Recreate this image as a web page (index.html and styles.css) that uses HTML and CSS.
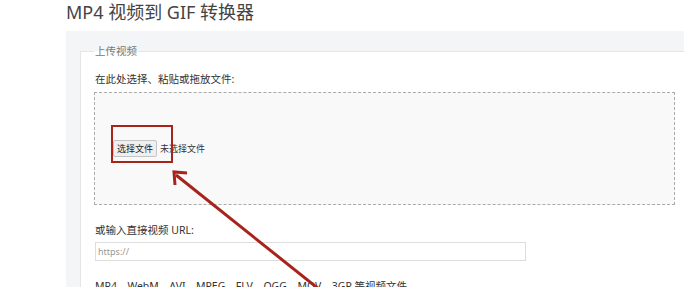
FILE: index.html
```html
<!DOCTYPE html>
<html>
<head>
  <title>MP4 视频到 GIF 转换器</title>
  <link rel="stylesheet" href="styles.css">
</head>
<body>
  <div class="page">
    <h1>MP4 视频到 GIF 转换器</h1>

    <div class="panel">
      <fieldset class="upload">
        <legend>上传视频</legend>

        <label class="field-label">在此处选择、粘贴或拖放文件:</label>
        <div class="dropzone">
          <button type="button" class="file-btn">选择文件</button>
          <span class="file-name">未选择文件</span>
        </div>

        <label class="field-label url-label" for="url">或输入直接视频 URL:</label>
        <input type="text" id="url" class="url-input" placeholder="https://">

        <p class="formats">MP4、WebM、AVI、MPEG、FLV、OGG、MOV、3GP 等视频文件</p>
      </fieldset>
    </div>

    <!-- annotation drawn over the form -->
    <svg class="markup" width="684" height="287" viewBox="0 0 684 287">
      <rect x="112" y="126" width="60" height="36" fill="none" stroke="#a8231b" stroke-width="2"/>
      <line x1="176" y1="175" x2="330" y2="298" stroke="#a8231b" stroke-width="3"/>
      <polyline points="187,173 174,172 175,185" fill="none" stroke="#a8231b" stroke-width="3" stroke-linejoin="miter"/>
    </svg>
  </div>
</body>
</html>
```

FILE: styles.css
```css
body {
  margin: 0;
  padding: 0;
  background-color: #ffffff;
  font-family: "Noto Sans", "Noto Sans CJK SC", sans-serif;
  color: #333333;
  overflow: hidden;
}

.page {
  position: relative;
  padding-left: 66px;
  height: 287px;
  overflow: hidden;
}

h1 {
  margin: 0;
  font-size: 18px;
  font-weight: normal;
  line-height: 24px;
  color: #444444;
}

.panel {
  margin-top: 7px;
  width: 720px;
  background-color: #f4f5f6;
  padding: 12px 0 0 14px;
}

.upload {
  margin: 0;
  padding: 12px 14px 0 14px;
  border: 1px solid #e4e5e6;
  background-color: #ffffff;
}

.upload legend {
  padding: 0 1px;
  margin-left: -1px;
  font-size: 10.5px;
  line-height: 16px;
  color: #777777;
}

.field-label {
  display: block;
  font-size: 10.5px;
  line-height: 16px;
  color: #333333;
}

.dropzone {
  margin-top: 5px;
  margin-left: -1px;
  width: 561px;
  height: 111px;
  border: 1px dashed #aaaaaa;
  background-color: #f9f9f9;
  display: flex;
  align-items: center;
  padding-left: 18px;
}

.file-btn {
  font-family: inherit;
  font-size: 9px;
  line-height: 13px;
  padding: 1px 3px;
  border: 1px solid #c4c4c4;
  border-radius: 2px;
  background-color: #efefef;
  color: #222222;
}

.file-name {
  margin-left: 3px;
  font-size: 9px;
  color: #333333;
}

.url-label {
  margin-top: 17px;
}

.url-input {
  margin-top: 2px;
  width: 431px;
  height: 19px;
  box-sizing: border-box;
  border: 1px solid #dddddd;
  padding: 0 2px;
  font-family: inherit;
  font-size: 9px;
  color: #333333;
}

.url-input::placeholder {
  color: #999999;
}

.formats {
  margin: 17px 0 0 0;
  font-size: 10.5px;
  line-height: 16px;
  color: #333333;
  padding-bottom: 20px;
}

.markup {
  position: absolute;
  left: 0;
  top: 0;
  pointer-events: none;
}
```
